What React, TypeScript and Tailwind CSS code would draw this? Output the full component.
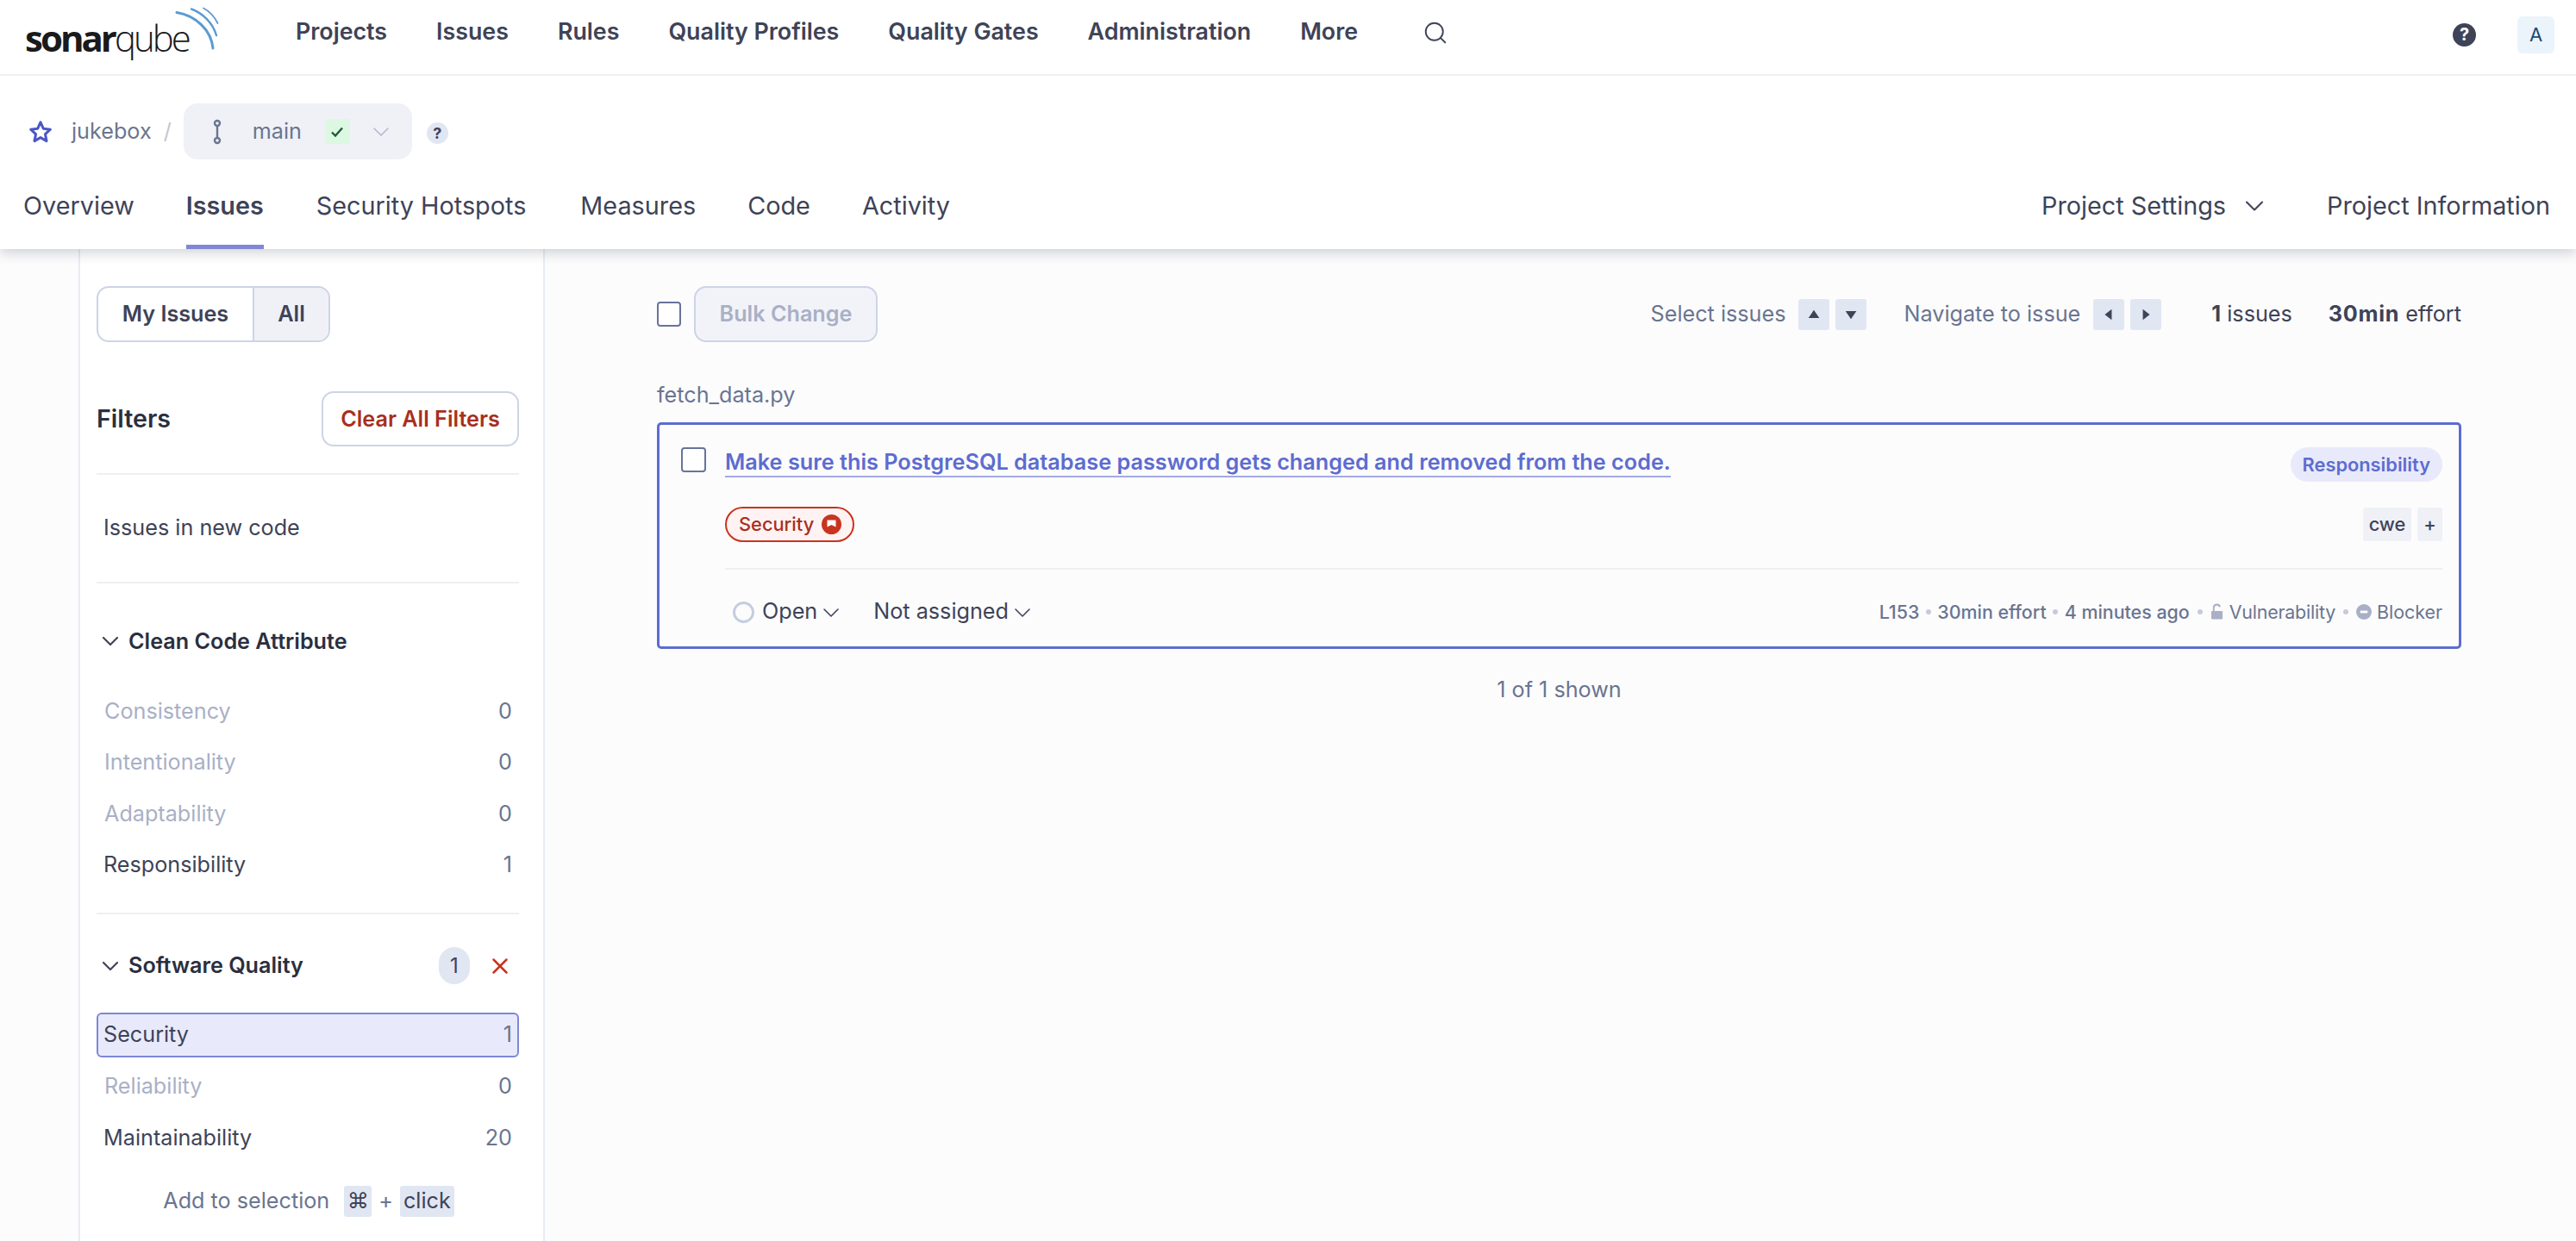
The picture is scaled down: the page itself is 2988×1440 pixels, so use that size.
import { ChevronDown, Search, X } from "lucide-react";

function Logo() {
  return (
    <div className="relative flex h-[87px] w-[260px] shrink-0 items-center">
      <span className="mt-[2px] font-['Open_Sans',sans-serif] text-[42px] leading-none tracking-[-3px] text-[#1a1a1c]">
        <span className="font-bold">sonar</span>
        <span className="font-light">qube</span>
      </span>
      {/* arcs are plotted in page coordinates, hence the -29px */}
      <svg className="absolute top-0 left-[-29px]" width="260" height="87" viewBox="0 0 260 87" fill="none" stroke="#5c9bd1" strokeLinecap="round">
        <path d="M205 14.5C227 18 245 35 247 56" strokeWidth="3" />
        <path d="M222 10.5C235 15 247 27 251 41" strokeWidth="2.4" />
        <path d="M236 9.5C243 13 249 20 252.500 27" strokeWidth="1.8" />
      </svg>
    </div>
  );
}

function TopNav() {
  return (
    <div className="flex h-[88px] items-center border-b-2 border-[#eeeff2] pr-[25px] pl-[29px]">
      <Logo />
      <nav className="mb-[14px] ml-[54px] flex items-center gap-[57px] text-[26.800px] font-semibold text-[#3e4357]">
        <span>Projects</span>
        <span>Issues</span>
        <span>Rules</span>
        <span>Quality Profiles</span>
        <span>Quality Gates</span>
        <span>Administration</span>
        <span>More</span>
      </nav>
      <Search className="mb-[10px] ml-[75px] text-[#3e4357]" size={30} strokeWidth={1.5} />
      <div className="mb-[6px] ml-auto flex h-[27px] w-[27px] items-center justify-center rounded-full bg-[#3e4357] text-[20px] font-bold text-white">?</div>
      <div className="mb-[6px] ml-[48px] flex h-[43px] w-[43px] items-center justify-center rounded-[6px] bg-[#ebf3fb] text-[22px] text-[#20496d]">A</div>
    </div>
  );
}

function Breadcrumb() {
  return (
    <div className="flex h-[97px] items-center pt-[32px] pl-[33px] text-[25.200px]">
      <svg width="28" height="28" viewBox="0 0 24 24" fill="none" stroke="#4b57c5" strokeWidth="2.6" strokeLinejoin="round">
        <path d="M12 2.500l2.900 6.300 6.800.8-5 4.700 1.300 6.800-6-3.400-6 3.400 1.300-6.800-5-4.700 6.800-.8z" />
      </svg>
      <span className="ml-[22px] text-[#6a7590]">jukebox</span>
      <span className="ml-[14px] text-[#c4c6cc]">/</span>
      <div className="ml-[14px] flex h-[65px] w-[265px] items-center rounded-[16px] bg-[#eff1f7] pl-[33px]">
        <svg width="12" height="30" viewBox="0 0 12 30" fill="none" stroke="#6a7590" strokeWidth="2.400">
          <circle cx="6" cy="5" r="3" />
          <circle cx="6" cy="25" r="3" />
          <path d="M6 8v14" />
        </svg>
        <span className="ml-[35px] text-[#6a7590]">main</span>
        <div className="ml-[27px] flex h-[29px] w-[29px] items-center justify-center rounded-[4px] bg-[#dcf7e2]">
          <svg width="18" height="18" viewBox="0 0 18 18" fill="none" stroke="#1f5c38" strokeWidth="2.400">
            <path d="M3 9.500l4 4 8-9" />
          </svg>
        </div>
        <ChevronDown className="ml-[20px] text-[#b3b9cc]" size={32} strokeWidth={1.2} />
      </div>
      <div className="mt-[4px] ml-[17px] flex h-[25px] w-[25px] items-center justify-center rounded-full bg-[#e1e6f3] text-[18px] font-bold text-[#3e4357]">?</div>
    </div>
  );
}

function TabBar() {
  return (
    <div className="flex h-[104px] items-stretch pr-[30px] pl-[27px] text-[28.800px] text-[#3e4357]">
      <div className="flex items-center pt-[4px]">Overview</div>
      <div className="ml-[60px] flex items-center border-b-[5px] border-[#7f87d6] pt-[9px] font-semibold">Issues</div>
      <div className="ml-[61px] flex items-center pt-[4px]">Security Hotspots</div>
      <div className="ml-[63px] flex items-center pt-[4px]">Measures</div>
      <div className="ml-[60px] flex items-center pt-[4px]">Code</div>
      <div className="ml-[60px] flex items-center pt-[4px]">Activity</div>
      <div className="ml-auto flex items-center pt-[4px]">Project Settings</div>
      <ChevronDown className="mt-[4px] ml-[15px] self-center" size={36} strokeWidth={1.4} />
      <div className="ml-[66px] flex items-center pt-[4px]">Project Information</div>
    </div>
  );
}

function FacetRow({ label, count, dim, selected }: { label: string; count: number; dim?: boolean; selected?: boolean }) {
  return (
    <div
      className={
        selected
          ? "flex h-[52px] items-center justify-between rounded-[6px] border-2 border-[#7f87d6] bg-[#e8eafb] px-[6px] pt-[1px] text-[25.200px] text-[#3e4357]"
          : "flex h-[52px] items-center justify-between px-[8px] pt-[1px] text-[25.200px]"
      }
    >
      <span className={dim ? "ml-[1px] text-[#a9b0c6]" : "text-[#3e4357]"}>{label}</span>
      <span className="text-[#6a7590]">{count}</span>
    </div>
  );
}

function Sidebar() {
  return (
    <aside className="ml-[91px] w-[541px] shrink-0 border-x-2 border-[#e8ecf5] bg-white pt-[43px] pr-[28px] pl-[19px]">
      <div className="flex h-[65px] w-[271px] overflow-hidden rounded-[14px] border-2 border-[#cdd4e6] text-[25.200px] font-semibold text-[#3e4357]">
        <div className="flex w-[181px] items-center justify-center border-r-2 border-[#cdd4e6]">My Issues</div>
        <div className="flex flex-1 items-center justify-center bg-[#eff1f7]">All</div>
      </div>
      <div className="mt-[57px] flex h-[64px] items-center justify-between">
        <span className="pt-[1px] text-[28.600px] font-semibold text-[#2a2f40]">Filters</span>
        <div className="flex h-[64px] w-[229px] items-center justify-center rounded-[14px] border-2 border-[#cdd4e6] pt-[2px] text-[25.200px] font-semibold text-[#a82f1e]">Clear All Filters</div>
      </div>
      <div className="mt-[31px] h-[2px] bg-[#eeeff2]" />
      <div className="flex h-[124px] items-center px-[8px] text-[25.200px] text-[#3e4357]">Issues in new code</div>
      <div className="h-[2px] bg-[#eeeff2]" />

      <div className="mt-[47px] flex h-[40px] items-center">
        <ChevronDown className="text-[#3e4357]" size={32} strokeWidth={1.6} />
        <span className="ml-[5px] pt-[2px] text-[25.200px] font-semibold text-[#2a2f40]">Clean Code Attribute</span>
      </div>
      <div className="mt-[35px] flex flex-col gap-[7.5px]">
        <FacetRow label="Consistency" count={0} dim />
        <FacetRow label="Intentionality" count={0} dim />
        <FacetRow label="Adaptability" count={0} dim />
        <FacetRow label="Responsibility" count={1} />
      </div>
      <div className="mt-[29px] h-[2px] bg-[#eeeff2]" />

      <div className="mt-[40px] flex h-[40px] items-center">
        <ChevronDown className="text-[#3e4357]" size={32} strokeWidth={1.6} />
        <span className="ml-[5px] pt-[1px] text-[25.200px] font-semibold text-[#2a2f40]">Software Quality</span>
        <span className="mr-[20px] ml-auto flex h-[43px] w-[36px] items-center justify-center rounded-full bg-[#e1e6f3] text-[24px] text-[#3e4357]">1</span>
        <X className="mr-[7px] text-[#c9341f]" size={30} strokeWidth={2} />
      </div>
      <div className="mt-[34px] flex flex-col gap-[8px]">
        <FacetRow label="Security" count={1} selected />
        <FacetRow label="Reliability" count={0} dim />
        <FacetRow label="Maintainability" count={20} />
      </div>
      <div className="mt-[29px] flex h-[36px] items-center justify-center pl-[2px] text-[25.200px] text-[#6a7590]">
        <span>Add to selection</span>
        <span className="ml-[17px] flex h-[36px] w-[32px] items-center justify-center rounded-[3px] bg-[#e1e6f3] text-[#3e4357]">⌘</span>
        <span className="mx-[8px]">+</span>
        <span className="flex h-[36px] items-center rounded-[3px] bg-[#e1e6f3] px-[4px] text-[#3e4357]">click</span>
      </div>
    </aside>
  );
}

function KeyBox({ d }: { d: string }) {
  return (
    <div className="flex h-[36px] w-[36px] items-center justify-center rounded-[3px] bg-[#e1e6f3]">
      <svg width="16" height="16" viewBox="0 0 14 14" fill="#3e4357">
        <path d={d} />
      </svg>
    </div>
  );
}

function Toolbar() {
  return (
    <div className="flex h-[65px] items-center text-[25.200px] text-[#6a7590]">
      <div className="h-[29px] w-[28px] rounded-[4px] border-2 border-[#69739a] bg-white" />
      <div className="ml-[15px] flex h-[65px] w-[213px] items-center justify-center rounded-[14px] border-2 border-[#cdd4e6] bg-[#f2f3f9] font-semibold text-[#a9b0c6]">Bulk Change</div>
      <span className="ml-auto">Select issues</span>
      <div className="ml-[15px] flex gap-[7px]">
        <KeyBox d="M7 2.500l5.500 8h-11z" />
        <KeyBox d="M7 11.500l-5.500-8h11z" />
      </div>
      <span className="ml-[43px]">Navigate to issue</span>
      <div className="ml-[15px] flex gap-[7px]">
        <KeyBox d="M3 7l7-5.500v11z" />
        <KeyBox d="M11 7l-7-5.500v11z" />
      </div>
      <span className="ml-[58px] text-[#3e4357]"><b className="font-bold">1</b> issues</span>
      <span className="ml-[42px] text-[#3e4357]"><b className="font-bold tracking-[0.7px]">30min</b> effort</span>
    </div>
  );
}

function Dot({ wide }: { wide?: boolean }) {
  return <span className={wide ? "mx-[9px] h-[6px] w-[6px] rounded-full bg-[#c5cbdc]" : "mx-[7.5px] h-[6px] w-[6px] rounded-full bg-[#c5cbdc]"} />;
}

function IssueCard() {
  return (
    <div className="mt-[12px] h-[263px] rounded-[5px] border-[3px] border-[#5d6cd0] pt-[26px] pr-[19px] pl-[25px]">
      <div className="flex h-[40px] items-start">
        <div className="h-[29px] w-[29px] rounded-[4px] border-2 border-[#69739a] bg-white" />
        <a className="ml-[22px] border-b-2 border-[#a3aae6] pt-[2px] text-[25.250px] leading-[31px] font-semibold text-[#5d6cd0]">Make sure this PostgreSQL database password gets changed and removed from the code.</a>
        <span className="ml-auto flex h-[40px] items-center rounded-full bg-[#e8eafb] px-[14px] text-[21.800px] font-semibold text-[#5d6cd0]">Responsibility</span>
      </div>
      <div className="mt-[29px] flex h-[41px] items-center pl-[51px]">
        <span className="flex h-[41px] items-center rounded-full border-2 border-[#c9341f] bg-[#fef3f2] pr-[13px] pl-[14px] text-[21.800px] font-medium text-[#a82f1e]">
          Security
          <svg className="ml-[9px]" width="23" height="23" viewBox="0 0 23 23">
            <circle cx="11.500" cy="11.500" r="11.500" fill="#c9341f" />
            <path d="M6.500 6.500h10v8l-5-2.500-5 2.500z" fill="#fff" />
            <path d="M8.500 14.500a3 3 0 0 0 6 0" fill="#c9341f" />
          </svg>
        </span>
        <span className="ml-auto flex h-[39px] w-[56px] items-center justify-center rounded-[3px] bg-[#eff1f7] text-[21.800px] font-medium text-[#3e4357]">cwe</span>
        <span className="ml-[7px] flex h-[39px] w-[29px] items-center justify-center rounded-[3px] bg-[#eff1f7] text-[21.800px] font-medium text-[#3e4357]">+</span>
      </div>
      <div className="mt-[30px] ml-[51px] h-[2px] bg-[#eeeff2]" />
      <div className="mt-[29px] flex h-[40px] items-center pl-[60px] text-[25.200px] text-[#3e4357]">
        <span className="h-[25px] w-[25px] rounded-full border-[3px] border-[#c5cde0]" />
        <span className="ml-[9px]">Open</span>
        <ChevronDown className="mt-[2px]" size={32} strokeWidth={1.2} />
        <span className="ml-[33px]">Not assigned</span>
        <ChevronDown className="mt-[2px]" size={32} strokeWidth={1.2} />
        <div className="ml-auto flex items-center text-[21.400px] font-medium text-[#6a7590]">
          <span>L153</span>
          <Dot />
          <span>30min effort</span>
          <Dot />
          <span>4 minutes ago</span>
          <Dot wide />
          <svg width="15" height="20" viewBox="0 0 16 20" fill="#a9b0c6">
            <path d="M3 9V5a5 5 0 0 1 9.800-1.500l-2 .6A3 3 0 0 0 5 5v4h9a1 1 0 0 1 1 1v8a1 1 0 0 1-1 1H2a1 1 0 0 1-1-1v-8a1 1 0 0 1 1-1z" />
          </svg>
          <span className="ml-[7px] font-normal tracking-[-0.2px]">Vulnerability</span>
          <Dot wide />
          <svg width="18" height="18" viewBox="0 0 19 19">
            <circle cx="9.500" cy="9.500" r="9.500" fill="#a9b0c6" />
            <rect x="5" y="8" width="9" height="3" fill="#fff" />
          </svg>
          <span className="ml-[6px] font-normal">Blocker</span>
        </div>
      </div>
    </div>
  );
}

export default function App() {
  return (
    <div className="flex h-[1440px] flex-col overflow-hidden bg-[#fcfcfd] font-['Inter',sans-serif]">
      <header className="relative z-10 h-[289px] shrink-0 bg-white shadow-[0_4px_14px_rgba(40,44,60,0.22)]">
        <TopNav />
        <Breadcrumb />
        <TabBar />
      </header>
      <div className="flex flex-1">
        <Sidebar />
        <main className="flex-1 pt-[43px] pr-[133px] pl-[130px]">
          <Toolbar />
          <div className="mt-[41px] flex h-[40px] items-center pt-[1px] text-[25.200px] text-[#6a7590]">fetch_data.py</div>
          <IssueCard />
          <div className="mt-[28px] flex h-[40px] items-center justify-center text-[25.200px] text-[#6a7590]">1 of 1 shown</div>
        </main>
      </div>
    </div>
  );
}
